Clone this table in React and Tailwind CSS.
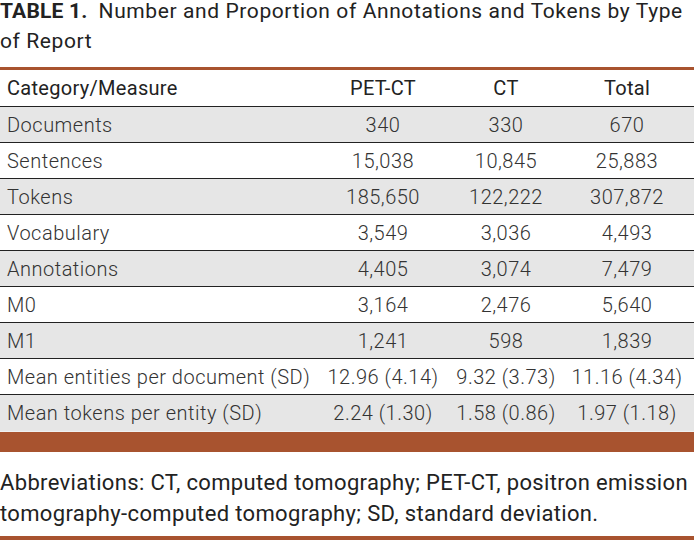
import React from "react";

const rows = [
  ["Documents", "340", "330", "670"],
  ["Sentences", "15,038", "10,845", "25,883"],
  ["Tokens", "185,650", "122,222", "307,872"],
  ["Vocabulary", "3,549", "3,036", "4,493"],
  ["Annotations", "4,405", "3,074", "7,479"],
  ["M0", "3,164", "2,476", "5,640"],
  ["M1", "1,241", "598", "1,839"],
  ["Mean entities per document (SD)", "12.96 (4.14)", "9.32 (3.73)", "11.16 (4.34)"],
  ["Mean tokens per entity (SD)", "2.24 (1.30)", "1.58 (0.86)", "1.97 (1.18)"],
];

export default function App() {
  return (
    <div
      className="w-[694px] h-[540px] bg-white text-[#222] overflow-hidden"
      style={{ fontFamily: "Roboto, 'Liberation Sans', sans-serif" }}
    >
      <p className="h-[56px] text-[21px] leading-[30px] tracking-[0.6px] text-[#222] -translate-y-[4px]">
        <b className="font-bold tracking-[0.2px] mr-[11px]">TABLE 1.</b>Number and Proportion of Annotations and Tokens by Type of Report
      </p>
      <div className="mt-[11px] h-[3px] bg-[#a8532f]" />
      <div className="grid grid-cols-[322px_122px_124px_1fr] h-[37px] border-b border-[#222] items-center text-[20px] tracking-[0.3px] text-[#222]">
        <div className="pl-[7px]">Category/Measure</div>
        <div className="text-center">PET-CT</div>
        <div className="text-center">CT</div>
        <div className="text-center pr-[8px]">Total</div>
      </div>
      {rows.map((r, i) => (
        <div
          key={i}
          className={`grid grid-cols-[322px_122px_124px_1fr] h-[36px] items-center text-[20px] tracking-[0.5px] font-light text-[#333] ${
            i % 2 === 0 ? "bg-[#e6e6e6]" : "bg-white"
          } ${i < rows.length - 1 ? "border-b border-[#222]" : ""}`}
        >
          <div className="pl-[7px] whitespace-nowrap">{r[0]}</div>
          <div className="text-center whitespace-nowrap">{r[1]}</div>
          <div className="text-center whitespace-nowrap">{r[2]}</div>
          <div className="text-center pr-[8px] whitespace-nowrap">{r[3]}</div>
        </div>
      ))}
      <div className="h-[1px] bg-[#f0f0f0]" />
      <div className="h-[20px] bg-[#a8532f]" />
      <div className="pt-[15px] h-[84px] text-[22px] leading-[31px] tracking-[0.35px] text-[#222]">
        Abbreviations: CT, computed tomography; PET-CT, positron emission tomography-computed tomography; SD, standard deviation.
      </div>
      <div className="h-[4px] bg-[#a8532f]" />
    </div>
  );
}
